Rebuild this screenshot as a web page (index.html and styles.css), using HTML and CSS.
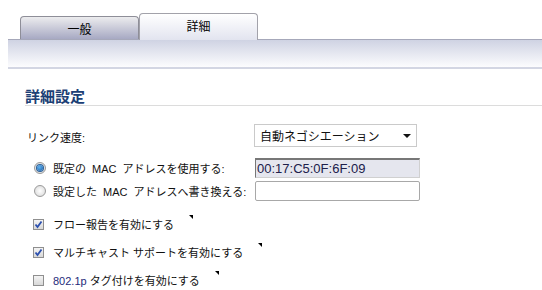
FILE: index.html
```html
<!DOCTYPE html>
<html lang="ja">
<head>
    <meta charset="UTF-8">
    <title>詳細設定</title>
    <link rel="stylesheet" href="styles.css">
</head>
<body>
    <div class="tabs">
        <div class="tab">一般</div>
        <div class="tab active">詳細</div>
    </div>
    <div class="band"></div>

    <div class="panel">
        <h2 class="sectionTitle">詳細設定</h2>

        <div class="form">
            <div class="label plain">リンク速度:</div>
            <div class="selectBox">
                <span>自動ネゴシエーション</span>
                <span class="arrow"></span>
            </div>

            <div class="label">
                <span class="radio checked"></span>
                <span class="wide">既定の MAC アドレスを使用する:</span>
            </div>
            <div class="textBox readonly">00:17:C5:0F:6F:09</div>

            <div class="label">
                <span class="radio"></span>
                <span class="wide">設定した MAC アドレスへ書き換える:</span>
            </div>
            <div class="textBox"></div>

            <div class="check first">
                <span class="box">
                    <svg width="9" height="9" viewBox="0 0 9 9"><path d="M1.5 4.5 L3.5 7 L7.5 1.5" fill="none" stroke="#2b4fae" stroke-width="1.8"/></svg>
                </span>
                <span>フロー報告を有効にする</span>
                <span class="tip"></span>
            </div>
            <div class="check">
                <span class="box">
                    <svg width="9" height="9" viewBox="0 0 9 9"><path d="M1.5 4.5 L3.5 7 L7.5 1.5" fill="none" stroke="#2b4fae" stroke-width="1.8"/></svg>
                </span>
                <span>マルチキャスト サポートを有効にする</span>
                <span class="tip"></span>
            </div>
            <div class="check">
                <span class="box"></span>
                <span><span class="code">802.1p</span> タグ付けを有効にする</span>
                <span class="tip"></span>
            </div>
        </div>
    </div>
</body>
</html>
```

FILE: styles.css
```css
* {
    margin: 0;
    padding: 0;
    box-sizing: border-box;
}
body {
    font-family: "Liberation Sans", "Noto Sans CJK JP", sans-serif;
    font-size: 11px;
    color: #111;
    background-color: #fff;
    width: 542px;
    height: 290px;
    overflow: hidden;
}
.tabs {
    display: flex;
    align-items: flex-end;
    margin: 13px 0 0 20px;
    height: 26px;
}
.tab {
    width: 119px;
    height: 23px;
    display: flex;
    align-items: center;
    justify-content: center;
    font-size: 12px;
    color: #000;
    border: 1px solid #8e8e98;
    border-bottom: none;
    border-radius: 4px 4px 0 0;
    background: linear-gradient(#ececee, #a7a9c3);
}
.tab.active {
    height: 27px;
    margin-bottom: -1px;
    position: relative;
    padding-bottom: 3px;
    border-color: #a2a2aa;
    background: linear-gradient(#ffffff, #e2e4ef);
}
.band {
    margin-left: 8px;
    height: 30px;
    border-top: 1px solid #a6a8ba;
    border-bottom: 2px solid #d3d6e3;
    background: linear-gradient(#cfd3e3, #fcfcfe);
}
.panel {
    margin-left: 25px;
}
.sectionTitle {
    margin-top: 19px;
    font-size: 15px;
    line-height: 17px;
    font-weight: bold;
    color: #1c3f75;
    border-bottom: 1px solid #dcdcdc;
}
.form {
    display: grid;
    grid-template-columns: 229px 166px;
    row-gap: 3px;
    margin-top: 18px;
}
.label {
    display: flex;
    align-items: center;
    gap: 7px;
    padding-left: 9px;
}
.label.plain {
    padding-left: 2px;
    margin-bottom: 8px;
    padding-top: 2px;
}
.wide {
    word-spacing: 3px;
}
.selectBox {
    width: 163px;
    height: 23px;
    border: 1px solid #cacaca;
    display: flex;
    align-items: center;
    justify-content: space-between;
    padding: 0 5px 0 5px;
    font-size: 12px;
    color: #111;
    margin-bottom: 8px;
}
.arrow {
    width: 0;
    height: 0;
    border-left: 4px solid transparent;
    border-right: 4px solid transparent;
    border-top: 4px solid #111;
}
.textBox {
    width: 165px;
    height: 20px;
    margin-left: 1px;
    border: 1px solid #a8a8a8;
    border-radius: 2px;
    font-size: 13px;
    line-height: 18px;
    padding-left: 2px;
}
.textBox.readonly {
    border-radius: 0;
    border-color: #777 #d0d0d0 #d0d0d0 #777;
    border-width: 2px 1px 1px 1px;
    line-height: 17px;
    padding-left: 1px;
    background-color: #e5e6ee;
    color: #20204a;
}
.radio {
    width: 12px;
    height: 12px;
    border-radius: 50%;
    border: 1px solid #9a9a9a;
    background: radial-gradient(#ffffff, #d6d6d6);
    display: flex;
    align-items: center;
    justify-content: center;
}
.radio.checked::after {
    content: "";
    width: 6px;
    height: 6px;
    border-radius: 50%;
    background: radial-gradient(circle at 40% 35%, #5fb2f0, #1a5ea8);
    box-shadow: 0 0 0 1px #2c5f96;
}
.check {
    grid-column: 1 / 3;
    display: flex;
    align-items: center;
    height: 20px;
    padding-left: 8px;
    margin-top: 5px;
}
.check.first {
    margin-top: 10px;
}
.box {
    width: 11px;
    height: 11px;
    border: 1px solid #8f8f8f;
    background: linear-gradient(#f4f4f4, #d8d8d8);
    display: flex;
    align-items: center;
    justify-content: center;
    margin-right: 9px;
}
.code {
    color: #1e2b7a;
}
.tip {
    align-self: flex-start;
    margin: 1px 0 0 15px;
    width: 0;
    height: 0;
    border-top: 4px solid #000;
    border-left: 4px solid transparent;
}
```
